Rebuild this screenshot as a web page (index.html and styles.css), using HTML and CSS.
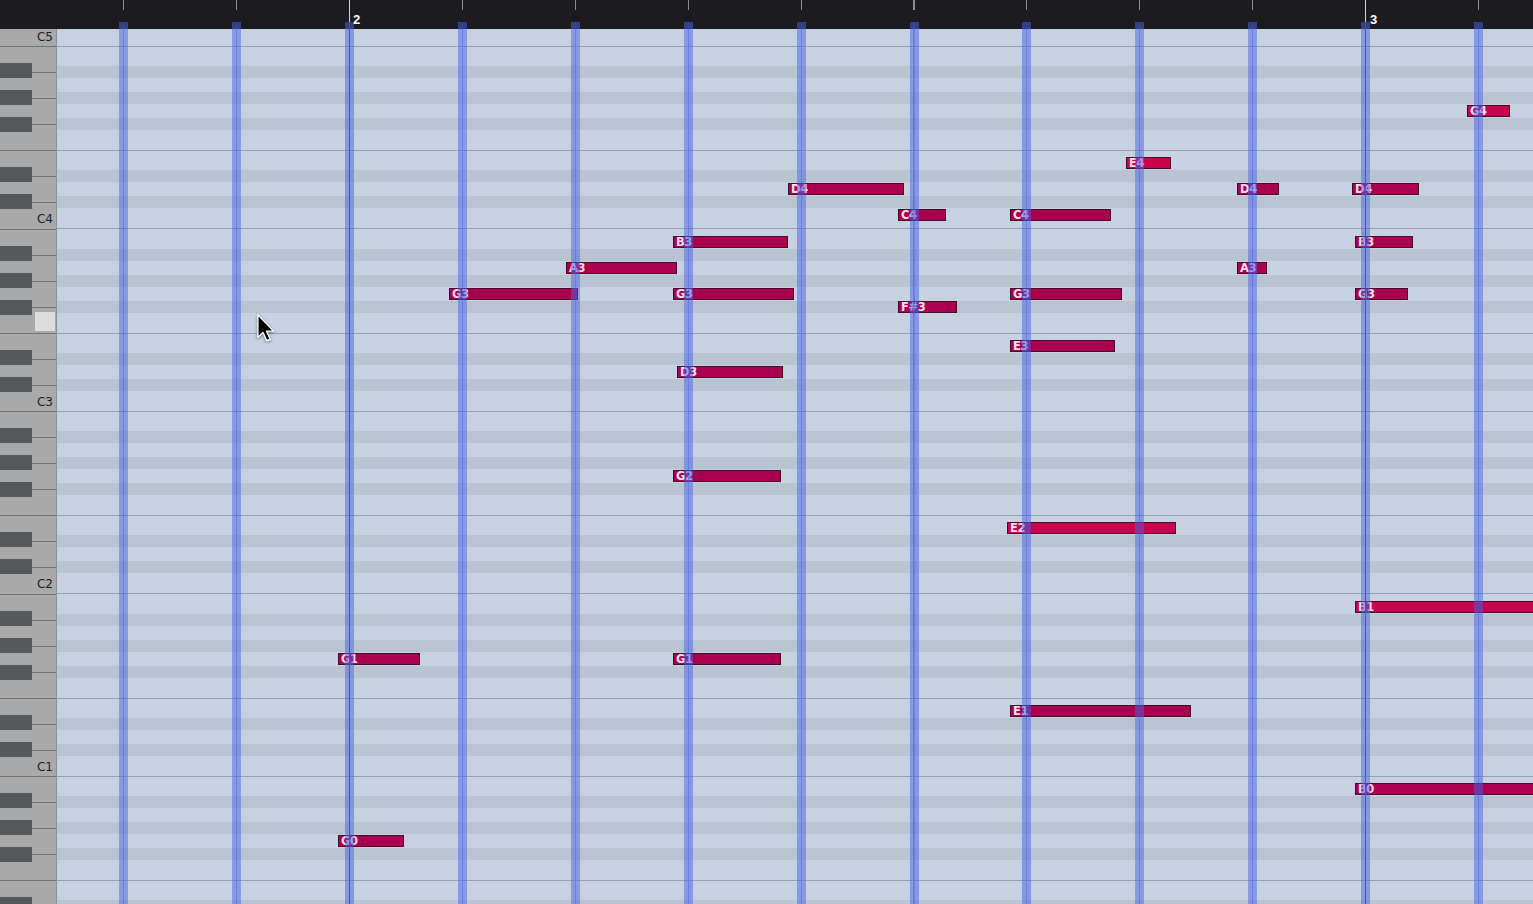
FILE: index.html
```html
<!DOCTYPE html>
<html lang="en">
<head>
    <meta charset="UTF-8">
    <meta name="viewport" content="width=device-width, initial-scale=1.0">
    <title>Piano Roll</title>
    <link rel="stylesheet" href="styles.css">
</head>
<body>
    <div class="editor">
        <header class="ruler">
            <div class="ruler-corner"></div>
            <div class="timeline">
                <span class="bar-number bar-2">2</span>
                <span class="bar-number bar-3">3</span>
            </div>
        </header>
        <main class="roll">
            <div class="keyboard">
                <div class="octave first"><span class="octave-label">C5</span></div>
                <div class="octave"><span class="octave-label">C4</span></div>
                <div class="octave">
                    <div class="key-hover"></div>
                    <span class="octave-label">C3</span>
                </div>
                <div class="octave"><span class="octave-label">C2</span></div>
                <div class="octave"><span class="octave-label">C1</span></div>
                <div class="octave"></div>
            </div>
            <div class="grid">
                <div id="notes" class="notes"></div>
                <div class="beats"></div>
            </div>
        </main>
        <svg class="pointer" width="20" height="30" viewBox="0 0 16 24">
            <path d="M1.5 1.5 L1.5 19.5 L5.6 15.6 L8.6 22.2 L11.4 21 L8.5 14.5 L14 14.5 Z"
                  fill="#000" stroke="#fff" stroke-width="1.1" stroke-linejoin="round"/>
        </svg>
    </div>
    <script src="script.js"></script>
</body>
</html>
```

FILE: styles.css
```css
body {
    margin: 0;
    padding: 0;
    background-color: #1c1c20;
    overflow: hidden;
    font-family: "DejaVu Sans", sans-serif;
}

.editor {
    position: relative;
    height: 100vh;
    display: flex;
    flex-direction: column;
}

/* ---- ruler ---- */

.ruler {
    flex: none;
    height: 29px;
    display: flex;
    background-color: #1c1c20;
}

.ruler-corner {
    width: 57px;
    flex: none;
}

.timeline {
    flex: 1;
    position: relative;
    background:
        repeating-linear-gradient(to right, #d4d4d4 291.9px, #d4d4d4 293px, transparent 293px, transparent 1308px) 0 0 / 100% 23px no-repeat,
        repeating-linear-gradient(to right, #8d8d8d 66.2px, #8d8d8d 67.2px, transparent 67.2px, transparent 179.1px) 0 0 / 100% 10px no-repeat;
}

.bar-number {
    position: absolute;
    top: 13px;
    color: #fff;
    font-family: "Liberation Sans", Arial, sans-serif;
    font-weight: bold;
    font-size: 13px;
    line-height: 13px;
}

.bar-2 { left: 296px; }
.bar-3 { left: 1313px; }

/* ---- piano roll body ---- */

.roll {
    flex: 1;
    display: flex;
    min-height: 0;
}

.keyboard {
    width: 57px;
    flex: none;
    box-sizing: border-box;
    border-right: 1px solid #8c9096;
    overflow: hidden;
    display: flex;
    flex-direction: column;
    background-color: #a9a9a9;
}

/* one octave, B at the top down to C at the bottom */
.octave {
    position: relative;
    flex: none;
    height: 182.5px;
    display: flex;
    align-items: flex-end;
    justify-content: flex-end;
    background:
        linear-gradient(to bottom,
            transparent 17.07px, #55585b 17.07px, #55585b 32.07px,
            transparent 32.07px, transparent 43.64px, #55585b 43.64px, #55585b 58.64px,
            transparent 58.64px, transparent 70.71px, #55585b 70.71px, #55585b 85.71px,
            transparent 85.71px, transparent 121.36px, #55585b 121.36px, #55585b 136.36px,
            transparent 136.36px, transparent 148.43px, #55585b 148.43px, #55585b 163.43px,
            transparent 163.43px) 0 0 / 32px 100% no-repeat,
        linear-gradient(to bottom,
            #737373 0, #737373 1px, transparent 1px,
            transparent 25.57px, #737373 25.57px, #737373 26.57px, transparent 26.57px,
            transparent 51.64px, #737373 51.64px, #737373 52.64px, transparent 52.64px,
            transparent 77.71px, #737373 77.71px, #737373 78.71px, transparent 78.71px,
            transparent 103.79px, #737373 103.79px, #737373 104.79px, transparent 104.79px,
            transparent 129.86px, #737373 129.86px, #737373 130.86px, transparent 130.86px,
            transparent 155.93px, #737373 155.93px, #737373 156.93px, transparent 156.93px);
}

.octave.first {
    margin-top: -165.5px;
}

.octave-label {
    font-size: 12px;
    line-height: 12px;
    color: #1d1d28;
    margin: 0 3px 3.5px 0;
}

.key-hover {
    position: absolute;
    top: 83.5px;
    left: 35px;
    width: 20px;
    height: 19px;
    background-color: #dddddd;
}

.grid {
    flex: 1;
    position: relative;
    background: repeating-linear-gradient(to bottom,
        #95a1b7 17px, #95a1b7 18px,
        #c6d2e1 18px, #c6d2e1 37.07px,
        #b9c4d2 37.07px, #b9c4d2 49.07px,
        #c6d2e1 49.07px, #c6d2e1 63.14px,
        #b9c4d2 63.14px, #b9c4d2 75.14px,
        #c6d2e1 75.14px, #c6d2e1 89.21px,
        #b9c4d2 89.21px, #b9c4d2 101.21px,
        #c6d2e1 101.21px, #c6d2e1 121.29px,
        #95a1b7 121.29px, #95a1b7 122.29px,
        #c6d2e1 122.29px, #c6d2e1 141.36px,
        #b9c4d2 141.36px, #b9c4d2 153.36px,
        #c6d2e1 153.36px, #c6d2e1 167.43px,
        #b9c4d2 167.43px, #b9c4d2 179.43px,
        #c6d2e1 179.43px, #c6d2e1 199.5px);
}

.notes {
    position: absolute;
    inset: 0;
}

.note {
    position: absolute;
    height: 12px;
    box-sizing: border-box;
    padding-left: 2px;
    background-color: #a9004f;
    border: 1px solid #4a0a28;
    color: #f6e0ec;
    font-size: 11.5px;
    font-weight: bold;
    line-height: 10px;
    letter-spacing: -0.4px;
    white-space: nowrap;
    overflow: hidden;
}

.note.hot {
    background-color: #c9034b;
}

/* beat bands sit over the notes and reach up into the ruler */
.beats {
    position: absolute;
    top: -7px;
    left: 0;
    right: 0;
    bottom: 0;
    z-index: 2;
    pointer-events: none;
    background:
        repeating-linear-gradient(to right, #3c56c9 291.8px, #3c56c9 293.2px, transparent 293.2px, transparent 1307.9px),
        repeating-linear-gradient(to right, rgba(55, 80, 210, 0.35) 66.2px, rgba(55, 80, 210, 0.35) 67.2px, transparent 67.2px, transparent 179.1px),
        repeating-linear-gradient(to right, rgba(70, 100, 230, 0.5) 62.2px, rgba(70, 100, 230, 0.5) 71.2px, transparent 71.2px, transparent 175.1px);
}

.pointer {
    position: absolute;
    left: 256px;
    top: 313px;
    z-index: 5;
    filter: drop-shadow(0 1px 1.5px rgba(0, 0, 0, 0.45));
}
```

FILE: script.js
```javascript
// piano roll geometry (page pixels)
const OCTAVE = 182.5;
const WHITE = OCTAVE / 7;
const C5_LINE = 46;
const GRID_TOP = 29;
const GRID_LEFT = 57;
const STEPS = { C: 0, D: 1, E: 2, F: 3, G: 4, A: 5, B: 6 };

// [pitch, start x, end x, loud]
const notes = [
    ['G4', 1467, 1510, true],
    ['E4', 1126, 1171, true],
    ['D4', 788, 904],
    ['D4', 1237, 1279],
    ['D4', 1352, 1419],
    ['C4', 898, 946],
    ['C4', 1010, 1111],
    ['B3', 673, 788],
    ['B3', 1355, 1413],
    ['A3', 566, 677],
    ['A3', 1237, 1267],
    ['G3', 449, 578],
    ['G3', 673, 794],
    ['G3', 1010, 1122],
    ['G3', 1355, 1408],
    ['F#3', 898, 957],
    ['E3', 1010, 1115],
    ['D3', 677, 783],
    ['G2', 673, 781],
    ['E2', 1007, 1176, true],
    ['B1', 1355, 1560, true],
    ['G1', 338, 420],
    ['G1', 673, 781],
    ['E1', 1010, 1191],
    ['B0', 1355, 1560],
    ['G0', 338, 404]
];

// vertical centre of a key, white keys in the middle of the key,
// sharps on the boundary above their natural
function pitchCenter(name) {
    const m = name.match(/^([A-G])(#?)(\d)$/);
    const cLine = C5_LINE + (5 - Number(m[3])) * OCTAVE;
    const step = STEPS[m[1]];
    return cLine - (m[2] ? step + 1 : step + 0.5) * WHITE;
}

const layer = document.getElementById('notes');
notes.forEach(([name, x1, x2, loud]) => {
    const el = document.createElement('div');
    el.className = loud ? 'note hot' : 'note';
    el.style.left = (x1 - GRID_LEFT) + 'px';
    el.style.top = (pitchCenter(name) - 6 - GRID_TOP) + 'px';
    el.style.width = (x2 - x1) + 'px';
    el.textContent = name;
    layer.appendChild(el);
});
```
